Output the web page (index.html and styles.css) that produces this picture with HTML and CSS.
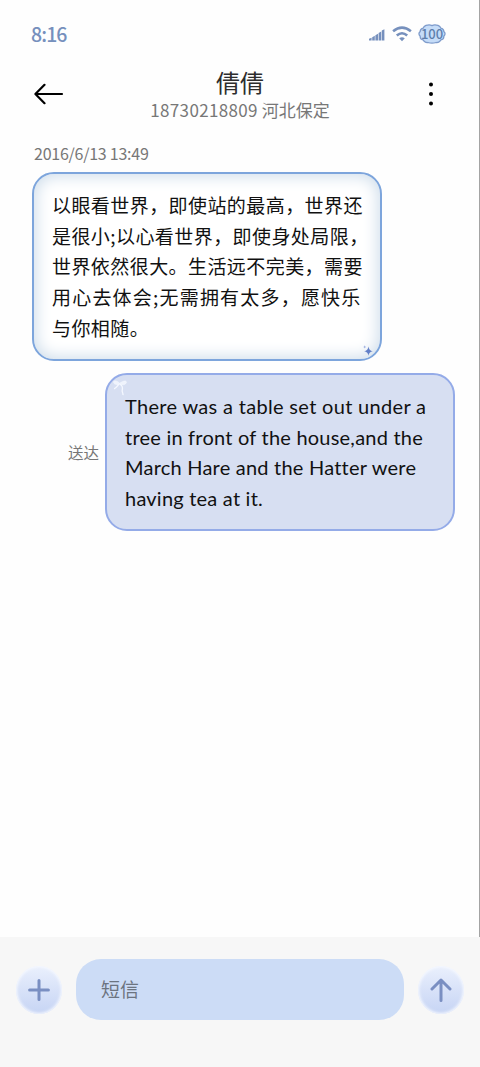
FILE: index.html
```html
<!DOCTYPE html>
<html lang="zh-CN">
<head>
<meta charset="utf-8">
<title>倩倩</title>
<link rel="stylesheet" href="styles.css">
</head>
<body>
<div class="phone">
  <div class="screen">
    <div class="status">
      <span class="clock">8:16</span>
      <div class="status-icons">
        <svg class="signal" width="16" height="13" viewBox="0 0 16 13"><path d="M0 10.800 2.600 9.800v2.600H0zM3.200 9.200 5.800 7.800v4.600H3.200zM6.400 7.300 9 5.800v6.600H6.400zM9.600 5 12.200 3.500v8.900H9.600zM12.800 2.600 15.400 1.300v11.100h-2.600z"/></svg>
        <svg class="wifi" width="20" height="16" viewBox="0 0 20 16"><path class="arc" d="M1.100 5.300Q10-2.100 18.900 5.300M4.800 9.500Q10 5 15.200 9.500"/><path class="dot" d="M7.200 12.300q2.800-2 5.600 0L10 15.200z"/></svg>
        <div class="battery">
          <svg width="28" height="20" viewBox="0 0 28 20"><path d="M8 1.400Q11.500.2 14 1.600 16.500.2 20 1.400q2.200.9 2.800 2.700 3 .8 3 3.300 2.500 2.200 0 4.900.2 2.900-2.800 3.500-1.500 3.100-5 2.700-4 1.200-8 0-3.500.4-5-2.700-3-.6-2.800-3.500-2.500-2.700 0-4.900 0-2.500 3-3.300Q5.800 2.300 8 1.400z"/></svg>
          <span class="level">100</span>
        </div>
      </div>
    </div>
    <header class="header">
      <svg class="back" width="30" height="22" viewBox="0 0 30 22"><path d="M1.400 11H28M10.500 1.800 1.400 11l9.100 9.200"/></svg>
      <div class="contact">
        <h1 class="name">倩倩</h1>
        <p class="number"><span class="digits">18730218809</span> 河北保定</p>
      </div>
      <svg class="more" width="6" height="24" viewBox="0 0 6 24"><circle cx="3" cy="2.600" r="2"/><circle cx="3" cy="12" r="2"/><circle cx="3" cy="21.400" r="2"/></svg>
    </header>
    <main class="thread">
      <time class="date">2016/6/13 13:49</time>
      <div class="bubble received">
        <p class="line">以眼看世界，即使站的最高，世界还</p>
        <p class="line">是很小;以心看世界，即使身处局限，</p>
        <p class="line">世界依然很大。生活远不完美，需要</p>
        <p class="line wide">用心去体会;无需拥有太多，愿快乐</p>
        <p class="line">与你相随。</p>
        <svg class="sparkle" width="10" height="11" viewBox="0 0 10 11"><path d="M5.500 1.500q.4 4 4.200 4.700-3.800.6-4.200 4.600-.5-4-4.300-4.600 3.800-.7 4.300-4.700z"/><path class="pale" d="M1.700.2q.2 1.500 1.500 1.700-1.300.2-1.500 1.600Q1.500 2.100.2 1.900 1.500 1.700 1.700.2z"/></svg>
      </div>
      <div class="sent-row">
        <span class="delivered">送达</span>
        <div class="bubble sent">
          <p class="line roomy">There was a table set out under a</p>
          <p class="line">tree in front of the house,and the</p>
          <p class="line">March Hare and the Hatter were</p>
          <p class="line">having tea at it.</p>
          <svg class="bow" width="14" height="16" viewBox="0 0 14 16"><path class="loop" d="M6.500 3.200C4 .6 1 .2.500 1.600s1.500 3.800 6 2.800c2.500.9 6 .3 6.800-1.500S12-.3 6.500 3.200z"/><path d="M6 4.300C4.500 5.500 3.500 8.200 1 8.800M7 4.300c2.300 1.300 2.800 3.700 2.200 6-.4 1.900 1.100 2.700.8 4.900"/></svg>
        </div>
      </div>
    </main>
  </div>
  <footer class="composer">
    <button class="round"><svg width="22" height="22" viewBox="0 0 22 22"><path d="M11 1.600v18.800M1.600 11h18.800"/></svg></button>
    <div class="input">短信</div>
    <button class="round"><svg width="22" height="24" viewBox="0 0 22 24"><path d="M11 22.500V2M2 11l9-9 9 9"/></svg></button>
  </footer>
</div>
</body>
</html>
```
FILE: styles.css
```css
* { box-sizing: border-box; }
body {
  margin: 0;
  background: #fff;
  font-family: "Noto Sans CJK SC", "Noto Sans", sans-serif;
}
h1, p { margin: 0; font-weight: 400; }
svg { display: block; fill: none; }

.phone { width: 480px; height: 1067px; display: flex; flex-direction: column; overflow: hidden; }
.screen { flex: 1; background: #fefefe; border-right: 1px solid #a4a4a4; }

.status {
  height: 64px;
  padding: 4px 33px 0 31px;
  display: flex;
  align-items: center;
  justify-content: space-between;
}
.clock { font-size: 19.500px; font-weight: 500; line-height: 24px; color: #7690bd; letter-spacing: -.9px; }
.status-icons { display: flex; align-items: center; }
.signal { fill: #7690bd; margin-right: 7px; }
.wifi { margin-right: 6px; }
.wifi .arc { stroke: #7690bd; stroke-width: 2.600; }
.wifi .dot { fill: #7690bd; }
.battery { position: relative; }
.battery path { fill: #c5dcf8; stroke: #7e9bcb; stroke-width: 1.300; }
.level {
  position: absolute;
  inset: 0;
  font-size: 13px;
  line-height: 19px;
  font-weight: 500;
  text-align: center;
  color: #5d7fac;
}

.header {
  height: 70px;
  padding: 0 45px 0 34px;
  display: flex;
  justify-content: space-between;
}
.back { margin-top: 19px; stroke: #000; stroke-width: 2.200; stroke-linecap: round; stroke-linejoin: round; }
.more { margin-top: 18px; fill: #000; }
.contact { text-align: center; padding-right: 12px; }
.name { font-size: 24px; line-height: 35px; color: #2d2d2d; }
.number { font-size: 17px; line-height: 21px; color: #777; }
.digits { letter-spacing: .350px; }

.thread { padding: 7px 24px 0 32px; }
.date { display: block; padding-left: 2px; font-size: 16px; line-height: 24px; letter-spacing: -.250px; color: #777; margin-bottom: 7px; }
.bubble { position: relative; width: 350px; border-radius: 22px; padding: 16px 18px; color: #111; }
.line { white-space: nowrap; line-height: 30.700px; }
.received {
  height: 189px;
  border: 2px solid #7da5dc;
  background: #fff;
  box-shadow: inset 0 0 16px 2px #cddcea;
  font-size: 19px;
  letter-spacing: .430px;
}
.wide { letter-spacing: 1.200px; }
.sparkle { position: absolute; right: 7px; bottom: 3px; fill: #627fc7; }
.sparkle .pale { fill: #9bade0; }

.sent-row { display: flex; align-items: center; justify-content: flex-end; margin-top: 12px; gap: 6px; }
.delivered { font-size: 15.500px; line-height: 22px; color: #777; }
.sent {
  height: 158px;
  border: 2px solid #94abe8;
  background: #d7dff2;
  font-family: Lato, sans-serif;
  font-size: 20px;
  letter-spacing: .220px;
}
.roomy { letter-spacing: .320px; }
.bow { position: absolute; left: 6px; top: 5px; stroke: #f5f8ff; stroke-width: 1.300; }
.bow .loop { fill: #eff3fc; stroke-width: .5; }

.composer {
  height: 130px;
  padding: 22px 16px 0;
  background: #f7f7f7;
  display: flex;
  align-items: flex-start;
  justify-content: space-between;
}
.input {
  width: 328px;
  height: 61px;
  padding-left: 25px;
  border-radius: 25px;
  background: #ccdcf6;
  color: #6c7480;
  font-size: 19px;
  line-height: 60px;
}
.round {
  width: 46px;
  height: 48px;
  margin-top: 7px;
  padding: 0;
  display: flex;
  align-items: center;
  justify-content: center;
  border: 0;
  border-radius: 50%;
  background: linear-gradient(#eaf0fd, #c6d4f4);
  box-shadow: inset 0 0 3px 1px #f8faff;
}
.round path { stroke: #7a8fc2; stroke-width: 3; stroke-linecap: round; stroke-linejoin: round; }
```
